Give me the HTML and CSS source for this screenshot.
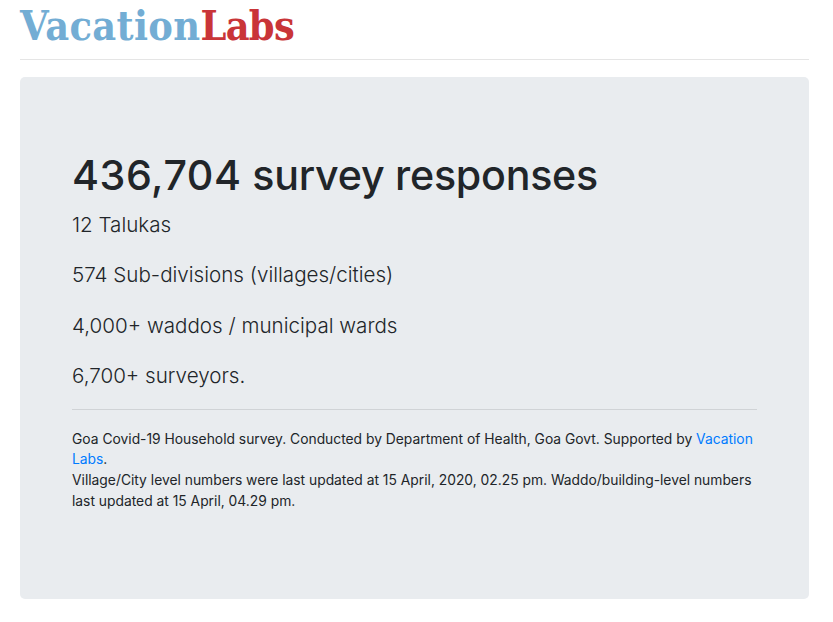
FILE: index.html
```html
<!DOCTYPE html>
<html lang="en">
<head>
  <meta charset="UTF-8">
  <title>Vacation Labs</title>
  <link rel="stylesheet" href="styles.css">
</head>
<body>
  <div class="container">
    <header class="site-header">
      <a href="#" class="logo"><span class="logo-blue">Vacation</span><span class="logo-red">Labs</span></a>
    </header>
    <div class="jumbotron">
      <h1><span class="count">436,704</span> survey responses</h1>
      <p class="lead">12 Talukas</p>
      <p class="lead">574 Sub-divisions (villages/cities)</p>
      <p class="lead">4,000+ waddos / municipal wards</p>
      <p class="lead">6,700+ surveyors.</p>
      <hr>
      <p class="note">Goa Covid-19 Household survey. Conducted by Department of Health, Goa Govt. Supported by <a href="#">Vacation Labs</a>.<br>Village/City level numbers were last updated at 15 April, 2020, 02.25 pm. Waddo/building-level numbers last updated at 15 April, 04.29 pm.</p>
    </div>
  </div>
</body>
</html>
```

FILE: styles.css
```css
body {
  margin: 0;
  font-family: 'Inter', 'Liberation Sans', sans-serif;
  color: #212529;
  background: #fff;
}
.container {
  padding: 0 24px 0 20px;
}
.site-header {
  height: 59px;
  border-bottom: 1px solid #e5e5e5;
  margin-bottom: 17px;
}
.logo {
  display: block;
  font-family: 'DejaVu Serif', serif;
  font-stretch: condensed;
  font-size: 41px;
  font-weight: 700;
  line-height: 52px;
  text-decoration: none;
}
.logo-blue {
  color: #73add4;
  letter-spacing: 0.35px;
}
.logo-red {
  color: #c93538;
  letter-spacing: -0.7px;
}
.jumbotron {
  background: #e9ecef;
  border-radius: 5px;
  padding: 74px 52px 0;
  height: 522px;
  box-sizing: border-box;
}
.jumbotron h1 {
  margin: 0 0 9px;
  font-size: 41.2px;
  font-weight: 500;
  line-height: 48px;
  letter-spacing: -0.25px;
}
.count {
  letter-spacing: 0.55px;
}
.lead {
  margin: 0 0 17px;
  font-size: 20.6px;
  font-weight: 300;
  line-height: 33.4px;
}
hr {
  border: 0;
  border-top: 1px solid #d0d3d6;
  margin: -1px 0 19px;
}
.note {
  margin: 0;
  font-size: 13.83px;
  line-height: 20.7px;
}
.note a {
  color: #007bff;
  text-decoration: none;
}
```
